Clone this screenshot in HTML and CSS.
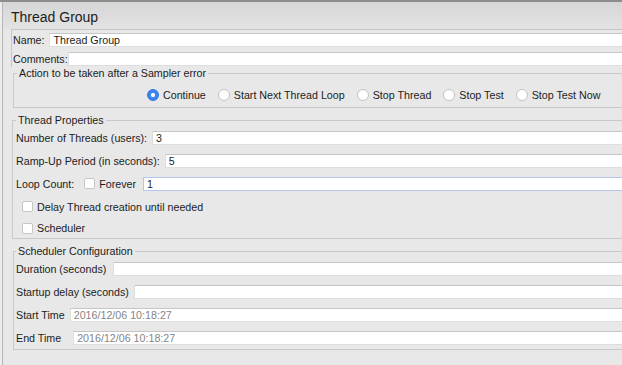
FILE: index.html
```html
<!DOCTYPE html>
<html lang="en">
<head>
    <meta charset="UTF-8">
    <title>Thread Group</title>
    <link rel="stylesheet" href="styles.css">
</head>
<body>

    <div class="panel">
        <h1 class="title">Thread Group</h1>

        <div class="namebox">
            <div class="row">
                <label class="lbl">Name:</label>
                <input class="field" type="text" value="Thread Group">
            </div>
            <div class="row comments">
                <label class="lbl tight">Comments:</label>
                <input class="field" type="text">
            </div>
        </div>

        <fieldset class="group action">
            <legend>Action to be taken after a Sampler error</legend>
            <div class="options">
                <label class="opt"><input type="radio" name="onerror" checked>Continue</label>
                <label class="opt"><input type="radio" name="onerror">Start Next Thread Loop</label>
                <label class="opt"><input type="radio" name="onerror">Stop Thread</label>
                <label class="opt"><input type="radio" name="onerror">Stop Test</label>
                <label class="opt"><input type="radio" name="onerror">Stop Test Now</label>
            </div>
        </fieldset>

        <fieldset class="group props">
            <legend>Thread Properties</legend>
            <div class="line">
                <label class="lbl">Number of Threads (users):</label>
                <input class="field" type="text" value="3">
            </div>
            <div class="line">
                <label class="lbl">Ramp-Up Period (in seconds):</label>
                <input class="field" type="text" value="5">
            </div>
            <div class="line">
                <label class="lbl loop">Loop Count:</label>
                <label class="check"><input type="checkbox">Forever</label>
                <input class="field focus" type="text" value="1">
            </div>
            <div class="line indent">
                <label class="check"><input type="checkbox">Delay Thread creation until needed</label>
            </div>
            <div class="line indent last">
                <label class="check"><input type="checkbox">Scheduler</label>
            </div>
        </fieldset>

        <fieldset class="group sched">
            <legend>Scheduler Configuration</legend>
            <div class="line">
                <label class="lbl dur">Duration (seconds)</label>
                <input class="field" type="text">
            </div>
            <div class="line">
                <label class="lbl">Startup delay (seconds)</label>
                <input class="field" type="text">
            </div>
            <div class="line">
                <label class="lbl">Start Time</label>
                <input class="field date" type="text" value="2016/12/06 10:18:27">
            </div>
            <div class="line">
                <label class="lbl wider">End Time</label>
                <input class="field date" type="text" value="2016/12/06 10:18:27">
            </div>
        </fieldset>
    </div>

</body>
</html>
```

FILE: styles.css
```css
html, body {
    margin: 0;
    overflow: hidden;
}
body {
    font-family: "Liberation Sans", Arial, sans-serif;
    font-size: 10.7px;
    color: #1c1c1c;
    background: #ededed;
    border-top: 2px solid #8d8d8d;
}
.panel {
    margin-left: 2px;
    width: 720px;
    height: 363px;
    border-left: 1px solid #b6b6b6;
    background: linear-gradient(#d6d6d6, #e3e3e3 27px, #e8e8e8 27px);
}
.title {
    margin: 0;
    padding: 3px 0 0 8px;
    height: 24px;
    line-height: 24px;
    font-size: 14px;
    font-weight: normal;
}
.namebox {
    margin-left: 8px;
    padding: 3px 0 1px 1px;
    border-top: 1px solid #c6c6c6;
    border-left: 1px solid #c6c6c6;
}
.row {
    display: flex;
    align-items: center;
    height: 14px;
}
.row.comments {
    margin-top: 5px;
}
.lbl {
    margin-right: 5px;
    white-space: nowrap;
}
.lbl.tight {
    margin-right: 0;
}
.lbl.dur {
    margin-right: 7px;
}
.lbl.wider {
    margin-right: 12px;
}
.field {
    flex: 1;
    min-width: 0;
    height: 14px;
    box-sizing: border-box;
    margin: 0;
    padding: 0 3px;
    border: 1px solid #dedede;
    border-top-color: #c6c6c6;
    background: #fff;
    font: inherit;
    color: inherit;
    outline: none;
}
.field.focus {
    border-color: #b1c6e8;
}
.field.date {
    color: #858585;
}

/* titled borders */
.group {
    margin: 0;
    padding: 0 0 0 3px;
    border: 1px solid #c9c9c9;
    min-width: 0;
}
.group legend {
    padding: 0 2px;
    line-height: 12px;
}
.action {
    margin-left: 10px;
    padding-bottom: 5px;
}
.props {
    margin: 6px 0 0 9px;
}
.sched {
    margin: 6px 0 0 10px;
    padding-left: 2px;
}

.options {
    display: flex;
    align-items: center;
    height: 14px;
    margin-top: 9px;
    padding-left: 130px;
}
.opt {
    display: flex;
    align-items: center;
    margin-right: 12px;
    white-space: nowrap;
}
.opt input {
    appearance: none;
    width: 12px;
    height: 12px;
    box-sizing: border-box;
    margin: 0 4px 0 0;
    border: 1px solid #c2c2c2;
    border-radius: 50%;
    background: #fff;
}
.opt input:checked {
    border-color: #2f76e0;
    background: radial-gradient(circle, #fff 0 1.8px, #3a86f0 2.4px);
}

.line {
    display: flex;
    align-items: center;
    height: 23px;
}
.line.last {
    height: 20px;
}
.line.indent {
    padding-left: 6px;
}
.lbl.loop {
    margin-right: 10px;
}
.check {
    display: flex;
    align-items: center;
    margin-right: 7px;
    white-space: nowrap;
}
.check input {
    appearance: none;
    width: 11px;
    height: 11px;
    box-sizing: border-box;
    margin: 0 4px 0 0;
    border: 1px solid #c6c6c6;
    border-radius: 2px;
    background: #fff;
}
```
